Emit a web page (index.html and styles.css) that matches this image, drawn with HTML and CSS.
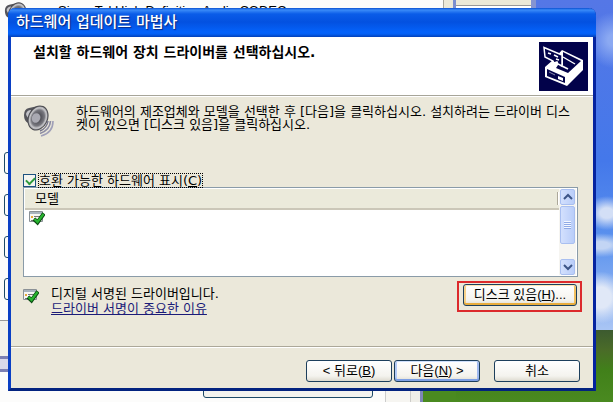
FILE: index.html
```
<!DOCTYPE html>
<html lang="ko">
  <head>
    <meta charset="UTF-8" />
    <meta name="viewport" content="width=device-width, initial-scale=1.0" />
    <title>하드웨어 업데이트 마법사</title>
    <link rel="stylesheet" href="styles.css">
  </head>
  <body>
    <!-- shared shapes -->
    <svg class="defs" width="0" height="0" aria-hidden="true">
      <defs>
        <radialGradient id="cone" cx="50%" cy="50%" r="55%">
          <stop offset="0" stop-color="#b9b9be" />
          <stop offset="0.3" stop-color="#55555c" />
          <stop offset="0.62" stop-color="#77777e" />
          <stop offset="0.8" stop-color="#c9c9cc" />
          <stop offset="1" stop-color="#6a6a70" />
        </radialGradient>
        <symbol id="speaker" viewBox="0 0 32 32">
          <path d="M1 10 Q1 4 6 3 L15 1 L13 21 L5 18 Q1 16 1 10Z" fill="#55555b" />
          <path d="M3 9 Q4 5 8 5 L9 14 Q4 14 3 9Z" fill="#c4c4ca" />
          <ellipse cx="15" cy="13" rx="10" ry="13" transform="rotate(24 15 13)" fill="#4b4b50" />
          <ellipse cx="15" cy="13" rx="9" ry="12" transform="rotate(24 15 13)" fill="url(#cone)" />
          <ellipse cx="13" cy="13" rx="4" ry="5" transform="rotate(24 13 13)" fill="#a9a9b2" />
          <path d="M25 16 Q24 23 17 26" fill="none" stroke="#77778c" stroke-width="1.5" />
          <path d="M27.500 16 Q27 25 17 28.500" fill="none" stroke="#8d8da3" stroke-width="1.7" />
          <path d="M30 16 Q30 28 18 31" fill="none" stroke="#a0a0b8" stroke-width="1.6" />
        </symbol>
        <symbol id="signed" viewBox="0 0 16 16">
          <path d="M0.500 1.500H13.500V11.500H0.500Z" fill="#f6f6f4" stroke="#8b9196" />
          <path d="M1 2H13V4H1Z" fill="#a8b4bf" />
          <path d="M2 6H4V8H2Z" fill="#e5a93b" />
          <path d="M5 6.500H11M5 8.500H7M2 10.500H6" stroke="#777" />
          <path d="M5 9 L8.500 12.500 L15 3.500" fill="none" stroke="#0b4a12" stroke-width="4" />
          <path d="M5.500 9 L8.500 12 L14.500 4" fill="none" stroke="#27b52f" stroke-width="2.200" />
        </symbol>
      </defs>
    </svg>

    <div class="desktop">
      <div class="window-behind properties">
        <svg class="properties-icon" viewBox="0 0 32 32" aria-hidden="true"><use href="#speaker" /></svg>
        <p class="device-name">SigmaTel High Definition Audio CODEC</p>
        <span class="edge-button first"></span>
        <span class="edge-button second"></span>
        <span class="edge-button third"></span>
        <span class="edge-button fourth"></span>
        <div class="frame-bottom"></div>
        <span class="lower-button"></span>
      </div>
      <div class="window-behind panel"></div>

      <div class="dialog">
        <div class="title-bar">하드웨어 업데이트 마법사</div>
        <div class="header">
          <h1>설치할 하드웨어 장치 드라이버를 선택하십시오.</h1>
          <svg class="header-icon" viewBox="0 0 49 49" aria-hidden="true">
            <path d="M0 0H49V49H0Z" fill="#02024a" />
            <path d="M23 8 L44 18 L44 28 L28 44 L6 35 L6 25 L14 18Z" fill="#fff" />
            <path d="M24 10 L42 19 L29 31 L17 26 L19 23 L24 23Z" fill="#02024a" />
            <path d="M24 15 L36 22" stroke="#fff" stroke-width="1.400" />
            <path d="M21 23 L29 27" stroke="#fff" stroke-width="1.800" />
            <path d="M8 27 L26 35 L26 41 L8 34Z" fill="#02024a" />
            <path d="M19 34 L24 36 L24 39 L19 37Z" fill="#fff" />
            <path d="M10 30 L16 33" stroke="#8888b0" />
            <path d="M5 5.500 L23 13 L23 24 L19 22 L18 20 L15 21 L14 19 L6 15Z" fill="#02024a" stroke="#fff" stroke-width="1.500" />
            <path d="M9 11 L12 12 M15 13 L19 15 M17 17 L20 18" stroke="#fff" stroke-width="1.500" />
          </svg>
        </div>

        <div class="content">
          <div class="intro">
            <svg class="speaker" viewBox="0 0 32 32" aria-hidden="true"><use href="#speaker" /></svg>
            <p>하드웨어의 제조업체와 모델을 선택한 후 [다음]을 클릭하십시오. 설치하려는 드라이버 디스켓이 있으면 [디스크 있음]을 클릭하십시오.</p>
          </div>

          <div class="compatible">
            <input type="checkbox" id="compatible" checked />
            <label for="compatible">호환 가능한 하드웨어 표시(<u>C</u>)</label>
          </div>

          <div class="model-list">
            <table>
              <thead>
                <tr><th>모델</th></tr>
              </thead>
              <tbody>
                <tr><td><svg class="signed-icon" viewBox="0 0 16 16" aria-hidden="true"><use href="#signed" /></svg></td></tr>
              </tbody>
            </table>
            <div class="scrollbar">
              <button class="arrow" aria-label="위로">
                <svg viewBox="0 0 10 8"><path d="M1 6 L5 2 L9 6" /></svg>
              </button>
              <div class="thumb"><i></i></div>
              <button class="arrow down" aria-label="아래로">
                <svg viewBox="0 0 10 8"><path d="M1 2 L5 6 L9 2" /></svg>
              </button>
            </div>
          </div>

          <div class="signature">
            <svg class="signed-icon" viewBox="0 0 16 16" aria-hidden="true"><use href="#signed" /></svg>
            <div class="signature-text">
              <p>디지털 서명된 드라이버입니다.</p>
              <a href="#">드라이버 서명이 중요한 이유</a>
            </div>
            <div class="highlight">
              <button class="btn hot">디스크 있음(<u>H</u>)...</button>
            </div>
          </div>
        </div>

        <div class="footer">
          <button class="btn">&lt; 뒤로(<u>B</u>)</button>
          <button class="btn default">다음(<u>N</u>) &gt;</button>
          <button class="btn cancel">취소</button>
        </div>
      </div>
    </div>
  </body>
</html>
```
FILE: styles.css
```
* {
  margin: 0;
  padding: 0;
  box-sizing: border-box;
}
body {
  font-family: "DejaVu Sans", "Noto Sans CJK KR", sans-serif;
  font-size: 13px;
  color: #000;
}
button {
  font: inherit;
}
.defs {
  position: absolute;
}
.desktop {
  position: relative;
  height: 100vh;
  overflow: hidden;
  background:
    radial-gradient(ellipse 22px 17px at 99% 53%, #d3dff6 30%, rgba(211, 223, 246, 0)),
    radial-gradient(ellipse 30px 12px at 98% 61%, #c3d5f4 30%, rgba(195, 213, 244, 0)),
    radial-gradient(ellipse 26px 26px at 98% 74%, #e0e8f7 40%, rgba(224, 232, 247, 0)),
    radial-gradient(ellipse 26px 28px at 100% 10%, #8ba9f2 20%, rgba(139, 169, 242, 0)),
    linear-gradient(#5577e6, #4478ea 40%, #5b92ee 60%, #a9c5f4 82%, #3c5a30 82%, #4a6b28 87%, #41801a 92%, #4a8a20);
}

/* windows under the wizard */
.window-behind {
  position: absolute;
  overflow: hidden;
}
.properties {
  left: 0;
  top: 0;
  width: 456px;
  height: 100%;
  background: linear-gradient(90deg, #fcfcfb 443px, #aaa89c 443px, #aaa89c 444px, #ece9d8 444px, #ece9d8 453px, #7c8fd0 453px);
}
.properties::after {
  content: "";
  position: absolute;
  left: 385px;
  right: 0;
  bottom: 0;
  height: 12px;
  background: linear-gradient(90deg, #ccc 1px, #f6f5f1 1px, #f6f5f1 25px, #aaa 25px, #f0efe9 26px, #f0efe9 35px, #7f86b8 35px, #7f86b8 38px, #4a8a20 38px);
}
.properties-icon {
  position: absolute;
  left: 4px;
  top: 2px;
  width: 28px;
  height: 28px;
}
.device-name {
  position: absolute;
  left: 58px;
  top: 3px;
  font-family: "Liberation Sans", sans-serif;
  line-height: 15px;
  white-space: nowrap;
}
.edge-button {
  position: absolute;
  left: 4px;
  width: 40px;
  height: 22px;
  border: 1px solid #1d4a68;
  border-radius: 3px;
}
.first {
  top: 152px;
}
.second {
  top: 194px;
}
.third {
  top: 236px;
}
.fourth {
  top: 278px;
}
.frame-bottom {
  position: absolute;
  left: 0;
  top: 320px;
  width: 30px;
  height: 52px;
  border-top: 1px solid #999;
  background: linear-gradient(#f2f1eb 35px, #7c80b4 35px, #7c80b4 38px, #d9d9ea 38px, #d9d9ea 48px, #7c80b4 48px);
}
.lower-button {
  position: absolute;
  left: 203px;
  bottom: 4px;
  width: 170px;
  height: 22px;
  border: 1px solid #1d4a68;
  border-radius: 3px;
  background: #f3f3ef;
}
.panel {
  left: 456px;
  top: 0;
  width: 80px;
  height: 40px;
  background: linear-gradient(#ece9d8 5px, #999 5px, #999 6px, #fff 6px);
  border-right: 5px solid #8594d2;
}

/* wizard */
.dialog {
  position: absolute;
  left: 8px;
  right: 17px;
  top: 8px;
  border: 3px solid #0a3fc4;
  border-top: 0;
  border-right-color: #0423a0;
  border-bottom-color: #03237f;
  border-radius: 7px 7px 0 0;
  background: #ebe8da;
}
.title-bar {
  height: 29px;
  margin: 0 -3px;
  padding-left: 8px;
  border-radius: 7px 7px 0 0;
  background: linear-gradient(#0b50d0, #3a8bf8 2px, #0a5ce8 6px, #0351e0 14px, #0462fa 24px, #0460f4 26px, #0340b8);
  color: #fff;
  font-size: 15px;
  font-weight: 500;
  line-height: 29px;
  text-shadow: 1px 1px 1px #0a2a80;
}
.header {
  display: flex;
  justify-content: space-between;
  height: 59px;
  padding: 5px 5px 0 22px;
  background: #fff;
  border-bottom: 1px solid #a7a599;
}
.header h1 {
  font-size: 14px;
  line-height: 21px;
}
.header-icon {
  width: 49px;
  height: 49px;
}
.content {
  padding: 8px 15px 0 12px;
  border-top: 1px solid #fff;
}
.intro {
  display: flex;
  gap: 21px;
  height: 68px;
}
.intro p {
  flex: 1;
  line-height: 13px;
  word-break: break-all;
}
.speaker {
  width: 32px;
  height: 32px;
}
.compatible {
  display: flex;
  align-items: center;
  gap: 2px;
  height: 14px;
}
.compatible input {
  appearance: none;
  width: 13px;
  height: 13px;
  border: 1px solid #1c5180;
  background: #f4f4f0;
}
.compatible input:checked::before {
  content: "";
  display: block;
  width: 7px;
  height: 4px;
  margin: 2px;
  border: solid #2f9a3a;
  border-width: 0 0 2px 2px;
  transform: rotate(-45deg);
}
.compatible label {
  border: 1px dotted #000;
  line-height: 13px;
}
.model-list {
  display: flex;
  justify-content: space-between;
  height: 90px;
  padding: 1px;
  border: 1px solid #8a9ba8;
  background: #fff;
}
table {
  flex: 1;
  align-self: flex-start;
  border-collapse: collapse;
}
th {
  height: 20px;
  padding-left: 10px;
  border-bottom: 2px solid #cbc7b8;
  background: linear-gradient(90deg, transparent calc(100% - 2px), #aca899 calc(100% - 2px), #aca899 calc(100% - 1px), #fff 0) 0 3px / 100% 13px no-repeat #ebeadb;
  font-weight: normal;
  line-height: 17px;
  text-align: left;
}
td {
  padding-left: 4px;
}
.signed-icon {
  display: block;
  width: 16px;
  height: 16px;
}
.scrollbar {
  display: flex;
  flex-direction: column;
  gap: 1px;
  width: 17px;
  padding: 0 1px;
  background: #f6f5f1;
}
.arrow,
.thumb {
  border: 1px solid #a9bff0;
  border-radius: 2px;
  background: linear-gradient(90deg, #d3e0fd, #b9cdf9);
}
.arrow {
  display: flex;
  align-items: center;
  justify-content: center;
  height: 16px;
}
.arrow svg {
  width: 10px;
  height: 8px;
}
.arrow path {
  fill: none;
  stroke: #3c5486;
  stroke-width: 2;
}
.down {
  margin-top: auto;
}
.thumb {
  display: flex;
  align-items: center;
  justify-content: center;
  height: 38px;
}
.thumb i {
  width: 7px;
  height: 8px;
  background: repeating-linear-gradient(#f4f8ff 0, #f4f8ff 1px, #8faae6 1px, #8faae6 2px);
}
.signature {
  display: flex;
  margin-right: -4px;
  padding-top: 4px;
  height: 69px;
}
.signature > .signed-icon {
  margin-top: 7px;
}
.signature-text {
  margin: 5px auto 0 12px;
  line-height: 15px;
}
.signature-text a {
  color: #1b1b78;
}
.highlight {
  align-self: flex-start;
  padding: 1px 3px 4px 4px;
  border: 2px solid #dc2a2c;
}
.btn {
  width: 86px;
  height: 22px;
  border: 1px solid #1d3f5c;
  border-radius: 3px;
  background: linear-gradient(#fff, #f4f3ee 75%, #dedbd0);
  font-family: "Liberation Sans", "Noto Sans CJK KR", sans-serif;
  line-height: 18px;
  white-space: nowrap;
}
.hot {
  width: 114px;
  box-shadow: inset 0 1px #fde5b4, inset 0 -2px #e8ac3c, inset 2px 0 #f7d28a, inset -2px 0 #f2c060;
}
.default {
  box-shadow: inset 0 1px #cfe0fc, inset 0 -2px #7d9fe4, inset 2px 0 #b4cbf6, inset -2px 0 #a0baf0;
}
.footer {
  display: flex;
  justify-content: flex-end;
  gap: 2px;
  padding: 13px 13px 6px;
  border-top: 1px solid #aca899;
  box-shadow: inset 0 1px #fff;
}
.cancel {
  margin-left: 12px;
}
```
